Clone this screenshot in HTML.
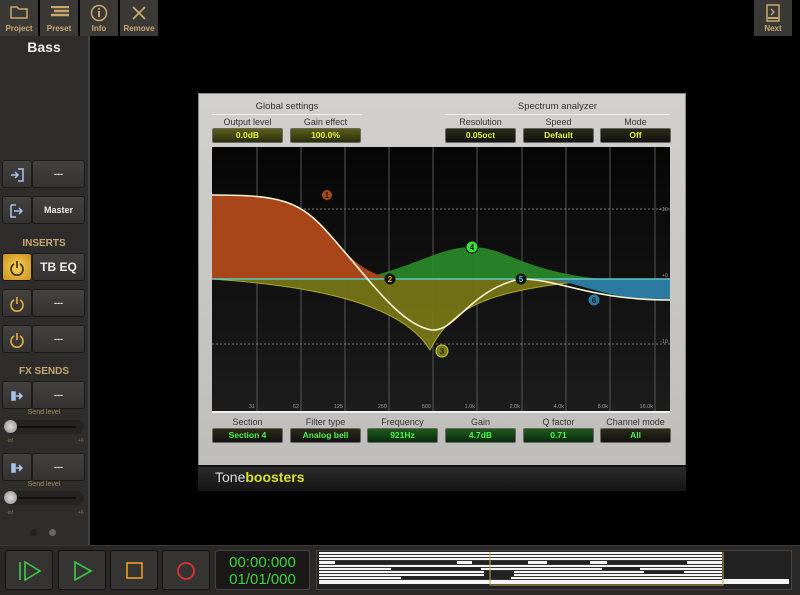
<!DOCTYPE html>
<html><head><meta charset="utf-8"><style>
*{margin:0;padding:0;box-sizing:border-box}
body{width:800px;height:595px;background:#000;position:relative;overflow:hidden;font-family:"Liberation Sans",sans-serif}
.a{position:absolute}
.tb{position:absolute;top:0;width:38px;height:36px;background:#3b3936;color:#c9a870;font-size:8px;text-align:center;font-weight:bold}
.tb span{position:absolute;bottom:3px;left:0;right:0}
.side{left:0;top:36px;width:90px;height:509px;background:#2f2d2b;border-right:2px solid #454341}
.btn{position:absolute;background:linear-gradient(#444240,#353331);border:1px solid #1c1b1a;border-radius:3px;color:#eee;font-size:9px;font-weight:bold;text-align:center}
.hd{position:absolute;left:0;width:88px;text-align:center;color:#c9a870;font-size:10px;font-weight:bold}
.lbl{position:absolute;font-size:9px;color:#333;text-align:center}
.fld{position:absolute;height:15px;border-radius:2px;background:linear-gradient(#2a2c18,#111);border:1px solid #666;color:#e6ef48;font-size:8.5px;font-weight:bold;text-align:center;line-height:13px;font-family:"Liberation Sans Narrow","Liberation Sans",sans-serif}
.g{color:#4cf04c}
.tr{position:absolute;top:550px;width:48px;height:40px;border:1px solid #111;border-radius:3px;background:#363432}
</style></head><body>
<div class="tb" style="left:0"><svg class="a" style="left:10px;top:5px" width="18" height="14"><path d="M1 2h6l2 2h8v9H1z" fill="none" stroke="#c9a870" stroke-width="1.5"/></svg><span>Project</span></div>
<div class="tb" style="left:40px"><svg class="a" style="left:10px;top:6px" width="20" height="12"><path d="M1 1h18M4 5h15M1 9h18" stroke="#c9a870" stroke-width="2.5"/></svg><span>Preset</span></div>
<div class="tb" style="left:80px"><svg class="a" style="left:10px;top:4px" width="18" height="18"><circle cx="9" cy="9" r="7.5" fill="none" stroke="#c9a870" stroke-width="1.5"/><path d="M9 7v6M9 4v1.5" stroke="#c9a870" stroke-width="2"/></svg><span>Info</span></div>
<div class="tb" style="left:120px"><svg class="a" style="left:11px;top:5px" width="16" height="16"><path d="M2 2l12 12M14 2L2 14" stroke="#c9a870" stroke-width="1.8"/></svg><span>Remove</span></div>
<div class="tb" style="left:754px;width:38px"><svg class="a" style="left:12px;top:4px" width="14" height="18"><rect x="1" y="1" width="12" height="16" fill="none" stroke="#c9a870" stroke-width="1.5"/><path d="M5 5l3 3-3 3" fill="none" stroke="#c9a870" stroke-width="1.3"/><path d="M2 14h10" stroke="#c9a870" stroke-width="2"/></svg><span>Next</span></div>
<div class="a side"></div>
<div class="a" style="left:0;top:39px;width:88px;text-align:center;color:#eee;font-size:14px;font-weight:bold">Bass</div>
<div class="btn" style="left:2px;top:160px;width:30px;height:28px"><svg style="margin-top:7px" width="14" height="14"><path d="M1 7h7M5 4l3 3-3 3M8 1h5v12H8" fill="none" stroke="#a9c4ec" stroke-width="1.5"/></svg></div>
<div class="btn" style="left:32px;top:160px;width:53px;height:28px;line-height:26px">---</div>
<div class="btn" style="left:2px;top:196px;width:30px;height:28px"><svg style="margin-top:7px" width="14" height="14"><path d="M1 1h5M1 1v12h5M4 7h8M9 4l3 3-3 3" fill="none" stroke="#a9c4ec" stroke-width="1.5"/></svg></div>
<div class="btn" style="left:32px;top:196px;width:53px;height:28px;line-height:26px">Master</div>
<div class="hd" style="top:238px">INSERTS</div>
<div class="btn" style="left:2px;top:253px;width:30px;height:28px;background:radial-gradient(#f7cf58,#c9911c)"><svg style="margin-top:6px" width="16" height="16"><path d="M5 4a6 6 0 1 0 6 0M8 1v7" fill="none" stroke="#3a2a08" stroke-width="1.6"/></svg></div>
<div class="btn" style="left:32px;top:253px;width:53px;height:28px;line-height:26px;font-size:12px">TB EQ</div>
<div class="btn" style="left:2px;top:289px;width:30px;height:28px"><svg style="margin-top:6px" width="16" height="16"><path d="M5 4a6 6 0 1 0 6 0M8 1v7" fill="none" stroke="#e0b040" stroke-width="1.6"/></svg></div>
<div class="btn" style="left:32px;top:289px;width:53px;height:28px;line-height:26px">---</div>
<div class="btn" style="left:2px;top:325px;width:30px;height:28px"><svg style="margin-top:6px" width="16" height="16"><path d="M5 4a6 6 0 1 0 6 0M8 1v7" fill="none" stroke="#e0b040" stroke-width="1.6"/></svg></div>
<div class="btn" style="left:32px;top:325px;width:53px;height:28px;line-height:26px">---</div>
<div class="hd" style="top:366px">FX SENDS</div>
<div class="btn" style="left:2px;top:381px;width:30px;height:28px"><svg style="margin-top:7px" width="14" height="14"><path d="M2 3h3v8H2zM6 7h6M9 4l3 3-3 3" fill="#a9c4ec" stroke="#a9c4ec" stroke-width="1.5"/></svg></div>
<div class="btn" style="left:32px;top:381px;width:53px;height:28px;line-height:26px">---</div>
<div class="a" style="left:0;top:409px;width:88px;text-align:center;color:#a48c64;font-size:7px">Send level</div>
<div class="a" style="left:4px;top:420px;width:80px;height:14px;border-radius:7px;background:#262422"></div>
<div class="a" style="left:10px;top:426px;width:66px;height:2px;background:#111"></div>
<div class="a" style="left:4px;top:420px;width:13px;height:13px;border-radius:50%;background:radial-gradient(#ddd,#888)"></div>
<div class="a" style="left:6px;top:438px;color:#8a7458;font-size:5px">-inf</div><div class="a" style="left:78px;top:438px;color:#8a7458;font-size:5px">+6</div>
<div class="btn" style="left:2px;top:453px;width:30px;height:28px"><svg style="margin-top:7px" width="14" height="14"><path d="M2 3h3v8H2zM6 7h6M9 4l3 3-3 3" fill="#a9c4ec" stroke="#a9c4ec" stroke-width="1.5"/></svg></div>
<div class="btn" style="left:32px;top:453px;width:53px;height:28px;line-height:26px">---</div>
<div class="a" style="left:0;top:481px;width:88px;text-align:center;color:#a48c64;font-size:7px">Send level</div>
<div class="a" style="left:4px;top:491px;width:80px;height:14px;border-radius:7px;background:#262422"></div>
<div class="a" style="left:10px;top:497px;width:66px;height:2px;background:#111"></div>
<div class="a" style="left:4px;top:491px;width:13px;height:13px;border-radius:50%;background:radial-gradient(#ddd,#888)"></div>
<div class="a" style="left:6px;top:510px;color:#8a7458;font-size:5px">-inf</div><div class="a" style="left:78px;top:510px;color:#8a7458;font-size:5px">+6</div>
<div class="a" style="left:30px;top:529px;width:7px;height:7px;border-radius:50%;background:#222"></div>
<div class="a" style="left:49px;top:529px;width:7px;height:7px;border-radius:50%;background:#666"></div>

<div class="a" style="left:198px;top:93px;width:488px;height:397px;background:linear-gradient(#d2d0cc,#bebcb8);border:1px solid #888"></div>
<div class="lbl" style="left:212px;top:101px;width:150px;font-size:9.5px">Global settings</div>
<div class="a" style="left:212px;top:114px;width:150px;height:1px;background:#eee"></div>
<div class="lbl" style="left:445px;top:101px;width:225px;font-size:9.5px">Spectrum analyzer</div>
<div class="a" style="left:445px;top:114px;width:225px;height:1px;background:#eee"></div>
<div class="lbl" style="left:212px;top:117px;width:71px">Output level</div>
<div class="lbl" style="left:290px;top:117px;width:71px">Gain effect</div>
<div class="lbl" style="left:445px;top:117px;width:71px">Resolution</div>
<div class="lbl" style="left:523px;top:117px;width:71px">Speed</div>
<div class="lbl" style="left:600px;top:117px;width:71px">Mode</div>
<div class="fld" style="left:212px;top:128px;width:71px;background:linear-gradient(#5a6018,#2a2e0c)">0.0dB</div>
<div class="fld" style="left:290px;top:128px;width:71px;background:linear-gradient(#5a6018,#2a2e0c)">100.0%</div>
<div class="fld" style="left:445px;top:128px;width:71px">0.05oct</div>
<div class="fld" style="left:523px;top:128px;width:71px">Default</div>
<div class="fld" style="left:600px;top:128px;width:71px">Off</div>
<svg class="a" style="left:0;top:0" width="800" height="595" viewBox="0 0 800 595">
<defs><linearGradient id="bg" x1="0" y1="0" x2="0" y2="1"><stop offset="0" stop-color="#060606"/><stop offset="1" stop-color="#1c1c1c"/></linearGradient></defs>
<rect x="212" y="147" width="458" height="264" fill="url(#bg)"/>
<g stroke="#555" stroke-width="1"><path d="M257 147V411M301 147V411M345 147V411M389 147V411M433 147V411M477 147V411M522 147V411M566 147V411M610 147V411M655 147V411"/></g>
<g stroke="#777" stroke-dasharray="2 2"><path d="M212 209H670M212 344H670"/></g>
<path d="M212 279 C300 285 400 300 430 350 C455 300 500 290 600 279 Z" fill="#7b7a16" stroke="#b8b830" opacity="0.9"/>
<path d="M360 279 C420 265 440 247 472 247 C505 247 520 270 600 279 Z" fill="#2a8c2a" opacity="0.9"/>
<path d="M212 195 C280 195 300 200 330 235 C355 265 370 275 395 279 L212 279 Z" fill="#a8461a"/>
<path d="M540 279 C580 280 600 300 670 300 L670 279 Z" fill="#2c7aa0"/>
<path d="M212 279H670" stroke="#5cc8c0" stroke-width="1.5"/>
<path d="M212 195 C280 195 300 200 330 235 C370 280 400 325 432 330 C455 332 470 290 520 279 C560 279 590 300 670 300" fill="none" stroke="#f4f0d0" stroke-width="1.6"/>
<g font-family="Liberation Sans" font-size="8" font-weight="bold" text-anchor="middle">
<circle cx="327" cy="195" r="5.5" fill="#a8461a" stroke="#111"/><text x="327" y="198" fill="#222">1</text>
<circle cx="390" cy="279" r="5.5" fill="#111"/><text x="390" y="282" fill="#f0b020">2</text>
<circle cx="442" cy="351" r="6" fill="#7b7a16" stroke="#c8c840"/><text x="442" y="354" fill="#222">3</text>
<circle cx="472" cy="247" r="6" fill="#3ae03a" stroke="#111"/><text x="472" y="250" fill="#111">4</text>
<circle cx="521" cy="279" r="5.5" fill="#111"/><text x="521" y="282" fill="#5cc8e0">5</text>
<circle cx="594" cy="300" r="5.5" fill="#2c7aa0"/><text x="594" y="303" fill="#222">6</text>
</g>
<g font-family="Liberation Sans" font-size="5.5" fill="#999" text-anchor="end">
<text x="255" y="408">31</text><text x="299" y="408">62</text><text x="343" y="408">125</text><text x="387" y="408">250</text><text x="431" y="408">500</text><text x="475" y="408">1.0k</text><text x="520" y="408">2.0k</text><text x="564" y="408">4.0k</text><text x="608" y="408">8.0k</text><text x="653" y="408">16.0k</text>
<text x="668" y="211">+10</text><text x="668" y="277">+0</text><text x="668" y="343">-10</text>
</g>
<rect x="212" y="411" width="458" height="2" fill="#eee"/>
</svg>
<div class="lbl" style="left:212px;top:417px;width:71px">Section</div>
<div class="lbl" style="left:290px;top:417px;width:71px">Filter type</div>
<div class="lbl" style="left:367px;top:417px;width:71px">Frequency</div>
<div class="lbl" style="left:445px;top:417px;width:71px">Gain</div>
<div class="lbl" style="left:523px;top:417px;width:71px">Q factor</div>
<div class="lbl" style="left:600px;top:417px;width:71px">Channel mode</div>
<div class="fld g" style="left:212px;top:428px;width:71px">Section 4</div>
<div class="fld g" style="left:290px;top:428px;width:71px">Analog bell</div>
<div class="fld g" style="left:367px;top:428px;width:71px;background:linear-gradient(#1e5a1e,#0c2a0c)">921Hz</div>
<div class="fld g" style="left:445px;top:428px;width:71px;background:linear-gradient(#1e5a1e,#0c2a0c)">4.7dB</div>
<div class="fld g" style="left:523px;top:428px;width:71px;background:linear-gradient(#1e5a1e,#0c2a0c)">0.71</div>
<div class="fld g" style="left:600px;top:428px;width:71px">All</div>
<div class="a" style="left:198px;top:465px;width:488px;height:26px;background:linear-gradient(#2a2a2a,#151515);border-top:2px solid #111"></div>
<div class="a" style="left:215px;top:469px;font-size:14px;color:#ddd">Tone<b style="color:#d8e030">boosters</b></div>

<div class="a" style="left:0;top:545px;width:800px;height:50px;background:#2a2826;border-top:1px solid #3a3836"></div>
<div class="tr" style="left:5px"><svg style="margin:10px 0 0 12px" width="24" height="20"><path d="M2 1v18M7 1l15 9-15 9z" fill="none" stroke="#3cc84a" stroke-width="1.6"/></svg></div>
<div class="tr" style="left:58px"><svg style="margin:10px 0 0 14px" width="20" height="20"><path d="M2 1l16 9-16 9z" fill="none" stroke="#3cc84a" stroke-width="1.6"/></svg></div>
<div class="tr" style="left:110px"><svg style="margin:11px 0 0 15px" width="18" height="18"><rect x="1" y="1" width="15" height="15" fill="none" stroke="#e8a020" stroke-width="1.6"/></svg></div>
<div class="tr" style="left:162px"><svg style="margin:10px 0 0 13px" width="20" height="20"><circle cx="10" cy="10" r="8" fill="none" stroke="#e03030" stroke-width="1.8"/></svg></div>
<div class="a" style="left:215px;top:550px;width:95px;height:40px;background:#1a1918;border:1px solid #444;border-radius:3px;color:#3cd23c;font-size:15px;line-height:17px;text-align:center;padding-top:3px">00:00:000<br>01/01/000</div>
<div class="a" style="left:316px;top:550px;width:476px;height:40px;background:#222;border:1px solid #444"></div>
<svg class="a" style="left:319px;top:552px" width="470" height="36">
<rect x="0" y="0" width="403" height="32" fill="#f4f4f4"/>
<rect x="403" y="27" width="67" height="5" fill="#f4f4f4"/>
<g fill="#333"><rect x="0" y="2" width="403" height="1"/><rect x="0" y="5" width="403" height="1"/><rect x="0" y="8" width="403" height="1"/><rect x="0" y="12" width="403" height="1"/><rect x="0" y="15" width="403" height="1"/><rect x="0" y="18" width="403" height="1"/><rect x="0" y="21" width="403" height="1"/><rect x="0" y="24" width="403" height="1"/><rect x="0" y="27" width="403" height="1"/></g>
<g fill="#222"><rect x="16" y="9" width="122" height="3"/><rect x="153" y="9" width="56" height="3"/><rect x="228" y="9" width="43" height="3"/><rect x="288" y="9" width="80" height="3"/><rect x="72" y="15" width="90" height="3"/><rect x="283" y="15" width="38" height="3"/><rect x="165" y="19" width="30" height="5"/><rect x="325" y="19" width="40" height="3"/><rect x="82" y="24" width="110" height="3"/></g>
<rect x="171" y="-1" width="233" height="34" fill="none" stroke="#c8a050" stroke-width="1"/>
</svg>
</body></html>
